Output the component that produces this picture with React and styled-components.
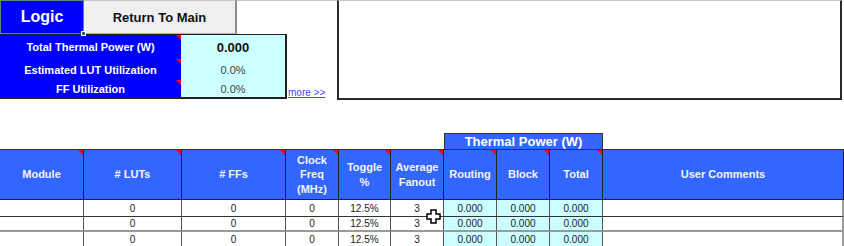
import React from 'react';
import styled, { createGlobalStyle } from 'styled-components';

const GlobalStyle = createGlobalStyle`
    html, body {
        margin: 0;
        padding: 0;
        background: #ffffff;
        font-family: "Liberation Sans", Arial, sans-serif;
    }
    * {
        box-sizing: border-box;
    }
`;

const COLS = '84px 98px 104px 53px 52px 53px 53px 53px 53px 1fr';

const Sheet = styled.div`
    width: 844px;
    height: 246px;
    overflow: hidden;
    position: relative;
`;

const Top = styled.div`
    display: flex;
    height: 100px;
`;

const LeftCol = styled.div`
    width: 287px;
    display: flex;
    flex-direction: column;
`;

const TabRow = styled.div`
    display: flex;
    height: 34px;
`;

const LogicTab = styled.div`
    position: relative;
    width: 84px;
    background: #0000ff;
    border: 1px solid #5f8a6c;
    color: #ffffff;
    font-weight: bold;
    font-size: 16px;
    display: flex;
    align-items: center;
    justify-content: center;
`;

const FillHandle = styled.span`
    position: absolute;
    right: -3px;
    bottom: -3px;
    width: 5px;
    height: 5px;
    background: #217346;
    border: 1px solid #ffffff;
    z-index: 2;
`;

const ReturnButton = styled.div`
    width: 153px;
    background: #efefef;
    border-top: 1px solid #c8c8c8;
    border-right: 2px solid #8c8c8c;
    border-bottom: 1px solid #b0b0b0;
    color: #111;
    font-weight: bold;
    font-size: 13px;
    display: flex;
    align-items: center;
    justify-content: center;
`;

const TopLine = styled.div`
    flex: 1;
    border-top: 1px solid #c8c8c8;
`;

const InfoPanel = styled.div`
    display: grid;
    grid-template-columns: 181px 1fr;
    grid-template-rows: 24px 21px 17px;
    border-top: 1px solid #222;
    border-right: 2px solid #222;
    border-bottom: 2px solid #222;
`;

const InfoLabel = styled.div`
    position: relative;
    background: #0000ff;
    color: #ffffff;
    font-weight: bold;
    font-size: 11px;
    display: flex;
    align-items: center;
    justify-content: center;
`;

const InfoValue = styled.div`
    background: #ccffff;
    color: ${p => (p.$strong ? '#111' : '#444')};
    font-weight: ${p => (p.$strong ? 'bold' : 'normal')};
    font-size: ${p => (p.$strong ? '13px' : '11px')};
    display: flex;
    align-items: center;
    justify-content: center;
`;

const Corner = styled.span`
    position: absolute;
    top: 0;
    right: 0;
    width: 0;
    height: 0;
    border-top: 5px solid #ff0000;
    border-left: 5px solid transparent;
`;

const MoreLink = styled.a`
    width: 50px;
    align-self: flex-end;
    padding: 0 0 2px 1px;
    font-size: 10px;
    color: #4646ff;
    text-decoration: underline;
    border-top: 1px solid #c8c8c8;
    height: 100px;
    display: flex;
    align-items: flex-end;
`;

const CommentBox = styled.div`
    width: 505px;
    height: 100px;
    border-top: 1px solid #c8c8c8;
    border-left: 2px solid #2a2a2a;
    border-right: 2px solid #2a2a2a;
    border-bottom: 2px solid #2a2a2a;
    background: #ffffff;
`;

const Table = styled.div`
    position: relative;
    margin-top: 33px;
    width: 844px;
`;

const Row = styled.div`
    display: grid;
    grid-template-columns: ${COLS};
    height: ${p => p.$h}px;
`;

const GroupHead = styled.div`
    grid-column: 7 / 10;
    background: #3366ff;
    color: #ffffff;
    font-weight: bold;
    font-size: 13px;
    border: 1px solid #333;
    border-bottom: none;
    display: flex;
    align-items: center;
    justify-content: center;
`;

const HeadCell = styled.div`
    position: relative;
    background: #3366ff;
    color: #f4f4ff;
    font-weight: bold;
    font-size: 11px;
    line-height: 14.5px;
    text-align: center;
    border-top: 1px solid #333;
    border-right: 1px solid #222;
    border-bottom: 1px solid #222;
    display: flex;
    align-items: center;
    justify-content: center;
`;

const Cell = styled.div`
    background: ${p => (p.$cyan ? '#ccffff' : '#ffffff')};
    color: #222;
    font-size: 10px;
    display: flex;
    align-items: center;
    justify-content: center;
    border-right: ${p => (p.$last ? '2px solid #9a9a9a' : '1px solid #555')};
    border-bottom: ${p => (p.$sep ? '2px solid #9a9a9a' : '1px solid #333')};
`;

const Cursor = styled.svg`
    position: absolute;
    left: 426px;
    top: 76px;
    z-index: 3;
`;

const headers = [
    { label: 'Module', mark: true },
    { label: '# LUTs', mark: true },
    { label: '# FFs', mark: true },
    { label: ['Clock', 'Freq', '(MHz)'], mark: true },
    { label: ['Toggle', '%'], mark: true },
    { label: ['Average', 'Fanout'], mark: true },
    { label: 'Routing', mark: true },
    { label: 'Block', mark: true },
    { label: 'Total', mark: true },
    { label: 'User Comments', mark: false },
];

const rows = [
    { h: 17, sep: false },
    { h: 15, sep: true },
    { h: 15, sep: false },
];

const rowValues = ['', '0', '0', '0', '12.5%', '3', '0.000', '0.000', '0.000', ''];

const info = [
    { label: 'Total Thermal Power (W)', value: '0.000', strong: true },
    { label: 'Estimated LUT Utilization', value: '0.0%' },
    { label: 'FF Utilization', value: '0.0%' },
];

const App = () => (
    <Sheet>
        <GlobalStyle />
        <Top>
            <LeftCol>
                <TabRow>
                    <LogicTab>
                        Logic
                        <FillHandle />
                    </LogicTab>
                    <ReturnButton>Return To Main</ReturnButton>
                    <TopLine />
                </TabRow>
                <InfoPanel>
                    {info.map(item => (
                        <React.Fragment key={item.label}>
                            <InfoLabel>
                                {item.label}
                                <Corner />
                            </InfoLabel>
                            <InfoValue $strong={item.strong}>{item.value}</InfoValue>
                        </React.Fragment>
                    ))}
                </InfoPanel>
            </LeftCol>
            <MoreLink href="#">more &gt;&gt;</MoreLink>
            <CommentBox />
        </Top>

        <Table>
            <Row $h={16}>
                <GroupHead>Thermal Power (W)</GroupHead>
            </Row>
            <Row $h={51}>
                {headers.map((h, i) => (
                    <HeadCell key={i}>
                        <span>
                            {Array.isArray(h.label)
                                ? h.label.map((l, j) => <div key={j}>{l}</div>)
                                : h.label}
                        </span>
                        {h.mark && <Corner />}
                    </HeadCell>
                ))}
            </Row>
            {rows.map((r, ri) => (
                <Row key={ri} $h={r.h}>
                    {rowValues.map((v, ci) => (
                        <Cell
                            key={ci}
                            $cyan={ci >= 6 && ci <= 8}
                            $sep={r.sep}
                            $last={ci === rowValues.length - 1}
                        >
                            {v}
                        </Cell>
                    ))}
                </Row>
            ))}
            {/* spreadsheet "select" cursor */}
            <Cursor width="15" height="15" viewBox="0 0 15 15">
                <path
                    d="M5 1h5v4h4v5h-4v4H5v-4H1V5h4z"
                    fill="#ffffff"
                    stroke="#000000"
                    strokeWidth="1.5"
                    strokeLinejoin="miter"
                />
            </Cursor>
        </Table>
    </Sheet>
);

export default App;
